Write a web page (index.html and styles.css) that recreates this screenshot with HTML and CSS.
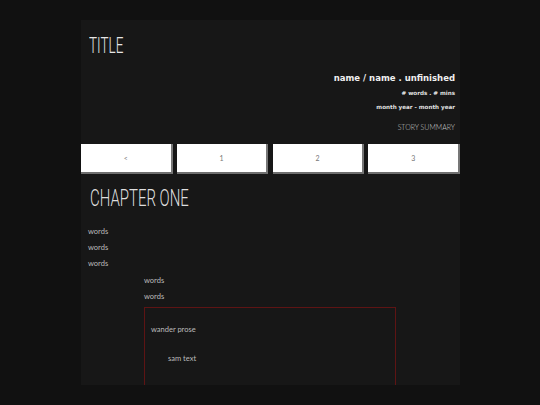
FILE: index.html
```html
<!DOCTYPE html>
<html>
<head>
<meta charset="utf-8">
<link rel="stylesheet" href="styles.css">
</head>
<body>
<div class="page">
  <header class="head">
    <h1 class="title"><span>TITLE</span></h1>
    <div class="meta">
      <p class="authors">name / name . unfinished</p>
      <p class="stats first">#&nbsp;words . # mins</p>
      <p class="stats">month year - month year</p>
      <p class="summary">STORY SUMMARY</p>
    </div>
  </header>
  <nav class="chapters">
    <button class="chap">&lt;</button>
    <button class="chap">1</button>
    <button class="chap">2</button>
    <button class="chap">3</button>
  </nav>
  <section class="chapter">
    <h2 class="chapter-title"><span>CHAPTER ONE</span></h2>
    <p class="line">words</p>
    <p class="line">words</p>
    <p class="line">words</p>
    <div class="indent">
      <p class="line">words</p>
      <p class="line">words</p>
      <div class="box">
        <p class="wander">wander prose</p>
        <p class="sam">sam text</p>
      </div>
    </div>
  </section>
</div>
</body>
</html>
```
FILE: styles.css
```css
html, body {
  margin: 0;
  padding: 0;
  background: #111111;
  height: 405px;
  overflow: hidden;
}
p, h1, h2 { margin: 0; }

.page {
  width: 379px;
  height: 365px;
  margin: 20px 0 0 81px;
  background: #171717;
  overflow: hidden;
  font-family: Lato, "Noto Sans", sans-serif;
  color: #bdbdbd;
}

.head {
  padding: 12px 5px 0 8px;
}
.title {
  font-family: Roboto, sans-serif;
  font-weight: 300;
  font-size: 22.5px;
  line-height: 26px;
  color: #e6e6e6;
  height: 26px;
}
.title span, .chapter-title span {
  display: inline-block;
  transform: scaleX(0.6);
  transform-origin: left center;
  white-space: nowrap;
}
.chapter-title span {
  transform: scaleX(0.65);
}
.meta {
  margin-top: 13px;
  text-align: right;
}
.authors {
  font-family: "DejaVu Sans", sans-serif;
  font-weight: bold;
  font-size: 8.5px;
  line-height: 14px;
  color: #f0f0f0;
}
.stats {
  font-family: "DejaVu Sans", sans-serif;
  font-weight: bold;
  font-size: 5.6px;
  line-height: 14px;
  color: #e0e0e0;
}
.stats.first {
  margin-top: 1px;
}
.summary {
  margin-top: 6px;
  font-size: 7px;
  line-height: 14px;
  color: #c8c8c8;
  font-weight: 300;
}

.chapters {
  display: flex;
  gap: 4.3px;
  margin-top: 10px;
}
.chap {
  flex: 1;
  height: 30px;
  margin: 0;
  padding: 0;
  background: #ffffff;
  border: none;
  border-right: 2px solid #777777;
  border-bottom: 2px solid #6f6f6f;
  font-family: Lato, sans-serif;
  font-size: 7px;
  color: #777777;
}

.chapter {
  padding: 10px 0 0 7px;
}
.chapter-title {
  font-family: Roboto, sans-serif;
  font-weight: 300;
  font-size: 23px;
  line-height: 30px;
  color: #dedede;
  padding-left: 2px;
  margin-bottom: 10px;
}
.line {
  font-size: 7.5px;
  line-height: 16.2px;
  color: #bbbbbb;
}
.indent {
  padding-left: 56px;
}
.box {
  margin-top: 2px;
  width: 252px;
  height: 90px;
  border: 1px solid #5e1414;
  padding: 16px 0 0 6px;
  box-sizing: border-box;
}
.wander {
  font-size: 7.5px;
  line-height: 12px;
  color: #bbbbbb;
}
.sam {
  margin-top: 17px;
  padding-left: 17px;
  font-size: 7.5px;
  line-height: 12px;
  color: #bbbbbb;
}
```
